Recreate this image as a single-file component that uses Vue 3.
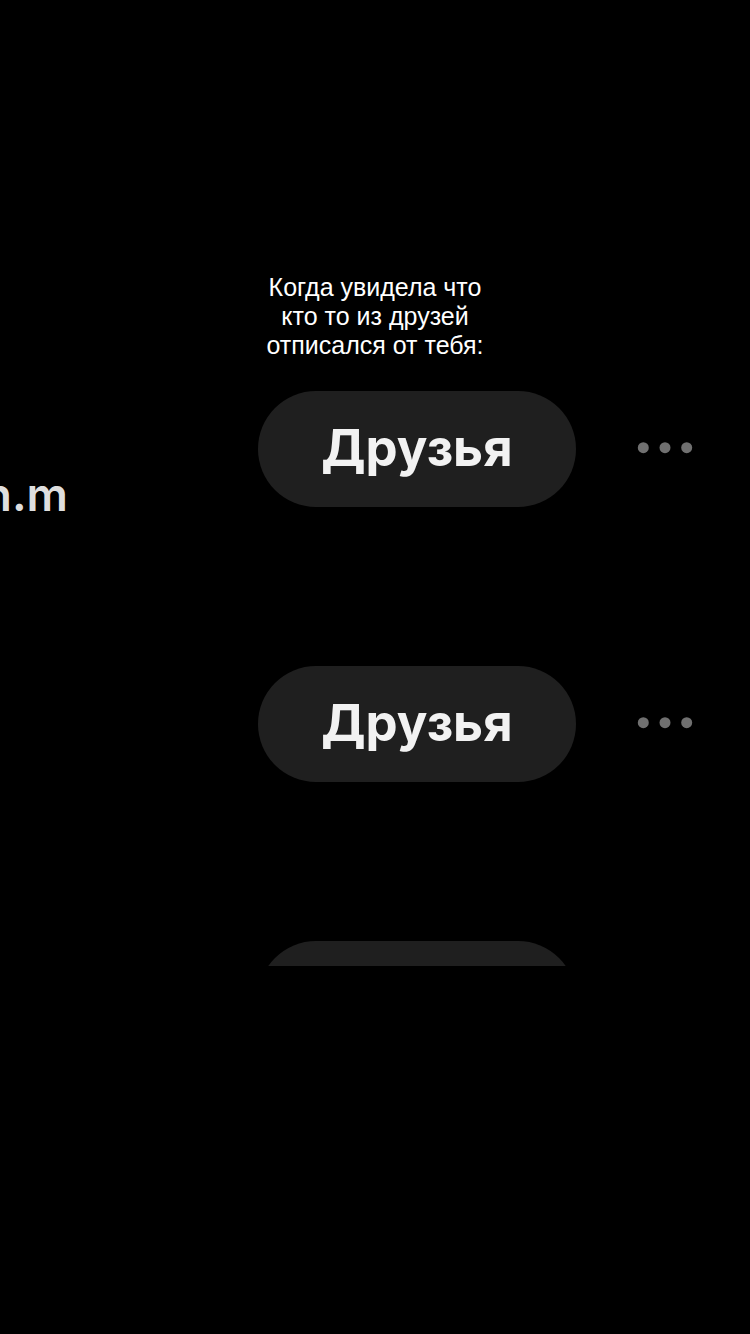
<template>
  <main class="story">
    <p class="caption">
      <span v-for="line in caption" :key="line">{{ line }}</span>
    </p>

    <ul class="friends">
      <li v-for="friend in friends" :key="friend.id" class="friend">
        <div class="name"><span>{{ friend.name }}</span></div>
        <button type="button" class="btn-friend">Друзья</button>
        <button type="button" class="btn-more" aria-label="Ещё">
          <svg viewBox="0 0 56 12" width="56" height="12">
            <circle cx="5.3" cy="4.7" r="5.5" />
            <circle cx="27" cy="4.7" r="5.5" />
            <circle cx="48.7" cy="4.7" r="5.5" />
          </svg>
        </button>
      </li>
    </ul>
  </main>
</template>

<script setup>
const caption = ['Когда увидела что', 'кто то из друзей', 'отписался от тебя:']

const friends = [
  { id: 1, name: 'n.m' },
  { id: 2, name: '' },
  { id: 3, name: '' }
]
</script>

<style>
body {
  background: #000;
}
</style>

<style scoped>
.story {
  min-height: 100vh;
  box-sizing: border-box;
  padding-top: 273px;
  background: #000;
  font-family: Inter, "Liberation Sans", sans-serif;
}

.caption {
  display: flex;
  flex-direction: column;
  align-items: center;
  margin: 0 0 31px;
  color: #fff;
  font-family: "Liberation Sans", Arial, sans-serif;
  font-size: 25px;
  line-height: 29px;
}

.friends {
  display: flex;
  flex-direction: column;
  gap: 159px;
  max-height: 575px;
  margin: 0;
  padding: 0;
  overflow: hidden;
  list-style: none;
}

.friend {
  display: flex;
  flex-shrink: 0;
  align-items: center;
  height: 116px;
  padding-right: 56px;
}

.name {
  display: flex;
  flex: 1;
  justify-content: flex-end;
  min-width: 0;
  padding: 90px 190px 0 0;
  overflow: hidden;
  color: #dedede;
  font-size: 46px;
  font-weight: 600;
  line-height: 56px;
  white-space: nowrap;
}

.btn-friend {
  width: 318px;
  height: 116px;
  padding: 0 0 2px;
  border: none;
  border-radius: 58px;
  background: #1f1f1f;
  color: #f2f2f2;
  font-family: inherit;
  font-size: 51px;
  font-weight: 700;
  line-height: 56px;
  cursor: pointer;
}

.btn-more {
  display: flex;
  margin-left: 62px;
  padding: 0;
  border: none;
  background: none;
  cursor: pointer;
}

.btn-more svg {
  overflow: visible;
  fill: #707070;
}
</style>
